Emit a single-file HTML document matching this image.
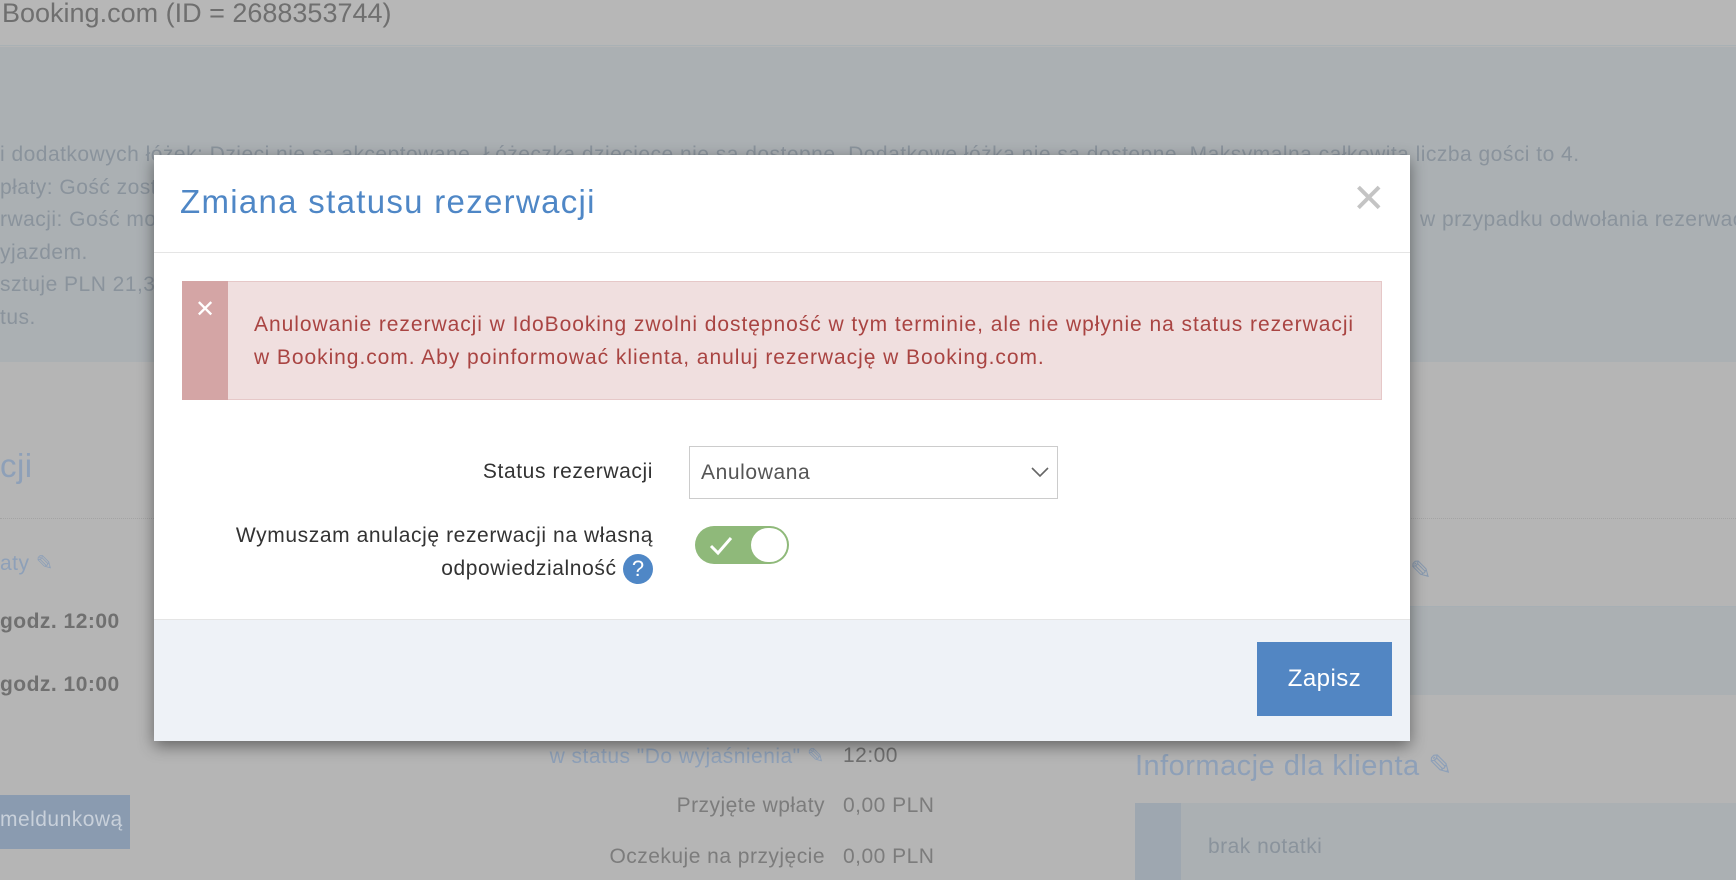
<!DOCTYPE html>
<html><head><meta charset="utf-8"><style>
*{margin:0;padding:0;box-sizing:border-box}
body{width:1736px;height:880px;overflow:hidden;background:#b5b5b5;font-family:"Liberation Sans",sans-serif;position:relative;letter-spacing:0.03em}
.a{position:absolute;white-space:nowrap}
.bgt{color:#8a939c;font-size:21px}
</style></head><body>
<div class="a" style="left:0;top:0;width:1736px;height:46px;background:#b7b7b7;border-bottom:1px solid #a9b1b5"></div>
<div class="a" style="left:2px;top:-2px;font-size:27px;color:#6f6f6f;letter-spacing:0">Booking.com (ID = 2688353744)</div>
<div class="a" style="left:0;top:47px;width:1736px;height:315px;background:#abb0b3"></div>
<div class="a bgt" style="left:0;top:143px">i dodatkowych łóżek: Dzieci nie są akceptowane. Łóżeczka dziecięce nie są dostępne. Dodatkowe łóżka nie są dostępne. Maksymalna całkowita liczba gości to 4.</div>
<div class="a bgt" style="left:0;top:176px">płaty: Gość zostanie obciążony</div>
<div class="a bgt" style="left:0;top:208px">rwacji: Gość może odwołać rezerwację bezpłatnie</div>
<div class="a bgt" style="left:1420px;top:208px">w przypadku odwołania rezerwacji</div>
<div class="a bgt" style="left:0;top:241px">yjazdem.</div>
<div class="a bgt" style="left:0;top:273px">sztuje PLN 21,30</div>
<div class="a bgt" style="left:0;top:306px">tus.</div>
<div class="a" style="left:0;top:447px;font-size:33px;color:#8ea0b8">cji</div>
<div class="a" style="left:0;top:518px;width:1736px;border-top:1px dotted #a4a4a4"></div>
<div class="a" style="left:0;top:551px;font-size:21px;color:#8ea0b8">aty ✎</div>
<div class="a" style="left:0;top:610px;font-size:21px;color:#707070;font-weight:bold">godz. 12:00</div>
<div class="a" style="left:0;top:673px;font-size:21px;color:#707070;font-weight:bold">godz. 10:00</div>
<div class="a" style="left:0;top:795px;width:130px;height:54px;background:#8a9bb0;color:#c8d0da;font-size:21px;padding:13px 0 0 0">meldunkową</div>
<div class="a" style="left:520px;top:744px;width:305px;text-align:right;font-size:21px;color:#8ea0b8">w status "Do wyjaśnienia" ✎</div>
<div class="a" style="left:843px;top:744px;font-size:21px;color:#707070">12:00</div>
<div class="a" style="left:520px;top:794px;width:305px;text-align:right;font-size:21px;color:#7c7c7c">Przyjęte wpłaty</div>
<div class="a" style="left:843px;top:794px;font-size:21px;color:#7c7c7c">0,00 PLN</div>
<div class="a" style="left:520px;top:845px;width:305px;text-align:right;font-size:21px;color:#7c7c7c">Oczekuje na przyjęcie</div>
<div class="a" style="left:843px;top:845px;font-size:21px;color:#7c7c7c">0,00 PLN</div>
<div class="a" style="left:1410px;top:555px;font-size:26px;color:#8a9bb0">✎</div>
<div class="a" style="left:1135px;top:606px;width:601px;height:89px;background:#abb0b3;border-top:1px solid #a7afb4"></div>
<div class="a" style="left:1135px;top:748px;font-size:29px;color:#8ea0b8">Informacje dla klienta ✎</div>
<div class="a" style="left:1135px;top:803px;width:601px;height:77px;background:#abb0b3"></div>
<div class="a" style="left:1135px;top:803px;width:46px;height:77px;background:#9ea7b0"></div>
<div class="a" style="left:1208px;top:835px;font-size:21px;color:#8a939c">brak notatki</div>

<div class="a" style="left:154px;top:155px;width:1256px;height:586px;background:#fff;box-shadow:0 5px 15px rgba(0,0,0,.45)">
  <div class="a" style="left:26px;top:28px;font-size:33px;color:#4f87c6;letter-spacing:1.3px">Zmiana statusu rezerwacji</div>
  <div class="a" style="left:1198px;top:24px;font-size:40px;color:#c4c4c4;line-height:1;letter-spacing:0">✕</div>
  <div class="a" style="left:0;top:97px;width:1256px;border-top:1px solid #e5e5e5"></div>
  <div class="a" style="left:28px;top:126px;width:1200px;height:119px;background:#f0dfdf;border:1px solid #e6c8c8"></div>
  <div class="a" style="left:28px;top:126px;width:46px;height:119px;background:#d4a5a5"></div>
  <div class="a" style="left:41px;top:140px;font-size:24px;color:#fff">✕</div>
  <div class="a" style="left:100px;top:153px;font-size:21px;color:#a94442;line-height:33px;letter-spacing:0.95px">Anulowanie rezerwacji w IdoBooking zwolni dostępność w tym terminie, ale nie wpłynie na status rezerwacji<br>w Booking.com. Aby poinformować klienta, anuluj rezerwację w Booking.com.</div>
  <div class="a" style="left:50px;top:305px;width:449px;text-align:right;font-size:21px;color:#333;letter-spacing:0.6px">Status rezerwacji</div>
  <div class="a" style="left:535px;top:291px;width:369px;height:53px;border:1px solid #ccc;font-size:21px;color:#555;padding:14px 0 0 11px;letter-spacing:0.6px">Anulowana</div>
  <svg class="a" style="left:877px;top:311px" width="18" height="12"><path d="M1 2 L9 10 L17 2" fill="none" stroke="#666" stroke-width="1.6"/></svg>
  <div class="a" style="left:0;top:364px;width:499px;text-align:right;font-size:21px;color:#333;line-height:33px;letter-spacing:0.6px">Wymuszam anulację rezerwacji na własną<br>odpowiedzialność <span style="display:inline-block;width:30px;height:30px;border-radius:50%;background:#4f87c6;color:#fff;text-align:center;line-height:30px;font-size:22px;vertical-align:middle;letter-spacing:0">?</span></div>
  <div class="a" style="left:541px;top:371px;width:94px;height:38px;border-radius:19px;background:#8fb97a"></div>
  <div class="a" style="left:597px;top:373px;width:36px;height:34px;border-radius:17px;background:#fff"></div>
  <svg class="a" style="left:554px;top:380px" width="26" height="22"><path d="M3 11 L10 18 L23 3" fill="none" stroke="#fff" stroke-width="3"/></svg>
  <div class="a" style="left:0;top:464px;width:1256px;height:122px;background:#eef2f7;border-top:1px solid #e5e5e5"></div>
  <div class="a" style="left:1103px;top:487px;width:135px;height:74px;background:#5286c3;color:#fff;font-size:24px;text-align:center;line-height:74px">Zapisz</div>
</div>
</body></html>
